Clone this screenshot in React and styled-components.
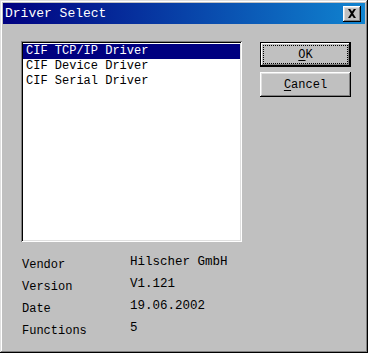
import React from "react";
import styled, { createGlobalStyle } from "styled-components";

const Global = createGlobalStyle`
  html, body { margin: 0; padding: 0; background: #c0c0c0; }
  * { box-sizing: border-box; }
`;

const mono = `"Liberation Mono", "DejaVu Sans Mono", monospace`;

const Window = styled.div`
  width: 368px;
  height: 353px;
  background: #c0c0c0;
  padding: 3px;
  box-shadow: inset -1px -1px #000, inset 1px 1px #dfdfdf,
    inset -2px -2px #808080, inset 2px 2px #fff;
  font-family: ${mono};
  font-size: 12px;
  color: #000;
  display: flex;
  flex-direction: column;
`;

const TitleBar = styled.div`
  height: 21px;
  background: linear-gradient(90deg, #000080, #1084d0);
  display: flex;
  align-items: center;
  justify-content: space-between;
  padding: 0 4px 0 2px;
`;

const Title = styled.span`
  color: #fff;
  font-size: 13px;
  line-height: 21px;
`;

const CloseButton = styled.div`
  width: 18px;
  height: 16px;
  background: #c0c0c0;
  box-shadow: inset -1px -1px #000, inset 1px 1px #fff,
    inset -2px -2px #808080, inset 2px 2px #dfdfdf;
  display: flex;
  align-items: center;
  justify-content: center;
  padding-bottom: 1px;
`;

const Body = styled.div`
  flex: 1;
  padding: 17px 13px 0 18px;
  display: flex;
  flex-direction: column;
`;

const TopRow = styled.div`
  display: flex;
  gap: 18px;
`;

const ListBox = styled.div`
  width: 221px;
  height: 201px;
  background: #fff;
  padding: 3px 2px;
  box-shadow: inset 1px 1px #808080, inset -1px -1px #fff,
    inset 2px 2px #000, inset -2px -2px #dfdfdf;
`;

const Item = styled.div`
  height: 15px;
  line-height: 15px;
  padding-left: 3px;
  white-space: pre;
  background: ${(p) => (p.$selected ? "#000080" : "transparent")};
  color: ${(p) => (p.$selected ? "#fff" : "#000")};
`;

const ButtonCol = styled.div`
  display: flex;
  flex-direction: column;
  gap: 5px;
  margin-top: 1px;
`;

const Button = styled.div`
  width: 91px;
  height: 25px;
  background: #c0c0c0;
  display: flex;
  padding: 3px;
  box-shadow: ${(p) =>
    p.$default
      ? "inset 0 0 0 1px #000, inset -2px -2px #000, inset 2px 2px #fff, inset -3px -3px #808080"
      : "inset -1px -1px #000, inset 1px 1px #fff, inset -2px -2px #808080, inset 2px 2px #dfdfdf"};
`;

const ButtonLabel = styled.span`
  flex: 1;
  display: flex;
  align-items: center;
  justify-content: center;
  border: 1px dotted ${(p) => (p.$focused ? "#000" : "transparent")};
  line-height: 14px;
  u { text-decoration: underline; text-underline-offset: 2px; }
`;

const Info = styled.div`
  margin-top: 13px;
  padding-left: 1px;
  display: grid;
  grid-template-columns: 108px auto;
  grid-auto-rows: 22px;
  align-items: start;
`;

const Label = styled.span`
  padding-top: 3px;
  line-height: 14px;
`;

const Value = styled.span`
  line-height: 14px;
  font-size: 12.5px;
`;

const drivers = ["CIF TCP/IP Driver", "CIF Device Driver", "CIF Serial Driver"];
const info = [
  ["Vendor", "Hilscher GmbH"],
  ["Version", "V1.121"],
  ["Date", "19.06.2002"],
  ["Functions", "5"],
];

export default function App() {
  return (
    <>
      <Global />
      <Window>
        <TitleBar>
          <Title>Driver Select</Title>
          <CloseButton>
            <svg width="10" height="9" viewBox="0 0 10 9">
              <path d="M1 0h2.2l1.8 2.6L6.8 0H9L6.1 4.5 9 9H6.8L5 6.4 3.2 9H1l2.9-4.5z" fill="#000" />
            </svg>
          </CloseButton>
        </TitleBar>
        <Body>
          <TopRow>
            <ListBox>
              {drivers.map((d, i) => (
                <Item key={d} $selected={i === 0}>{d}</Item>
              ))}
            </ListBox>
            <ButtonCol>
              <Button $default>
                <ButtonLabel $focused><span><u>O</u>K</span></ButtonLabel>
              </Button>
              <Button>
                <ButtonLabel><span><u>C</u>ancel</span></ButtonLabel>
              </Button>
            </ButtonCol>
          </TopRow>
          <Info>
            {info.map(([k, v]) => (
              <React.Fragment key={k}>
                <Label>{k}</Label>
                <Value>{v}</Value>
              </React.Fragment>
            ))}
          </Info>
        </Body>
      </Window>
    </>
  );
}
